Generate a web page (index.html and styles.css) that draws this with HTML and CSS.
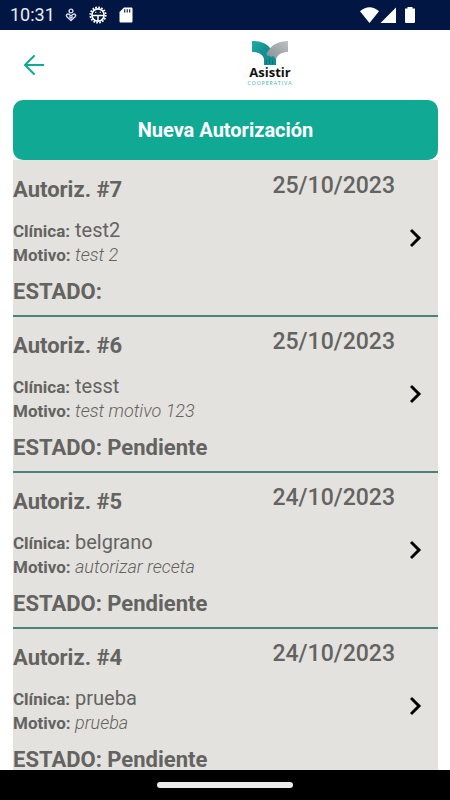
FILE: index.html
```html
<!DOCTYPE html>
<html lang="es">
<head>
<meta charset="utf-8">
<meta name="viewport" content="width=device-width, initial-scale=1">
<title>Autorizaciones</title>
<link rel="stylesheet" href="styles.css">
</head>
<body>
<div class="status">
  <span class="clock">10:31</span>
  <svg class="i-heart" viewBox="0 0 12 14" fill="none" stroke="#d5dbe8" stroke-width="1.4"><circle cx="6" cy="3" r="1.9"/><path d="M6 12.6 1.9 8.7C.6 7.3 2.3 5.2 4 6.3L6 8l2-1.7c1.7-1.1 3.4 1 2.1 2.4z"/><path d="M4.3 8.6 6 10.3l1.700-1.700"/></svg>
  <svg class="i-gear" viewBox="0 0 18 18" fill="none" stroke="#fff"><circle cx="9" cy="9" r="7.700" stroke-width="1.800" stroke-dasharray="1.700 1.325"/><circle cx="9" cy="9" r="6.100" stroke-width="1.600"/><path d="M3 9.400h12M9 9.400V15" stroke-width="1.500"/><path d="M6.300 6.300h1M10.700 6.300h1" stroke-width="1.200"/></svg>
  <svg class="i-card" viewBox="0 0 14 16"><path fill="#fff" d="M5 .5h7.200c.8 0 1.300.5 1.300 1.300v12.400c0 .8-.5 1.300-1.300 1.300H1.800c-.8 0-1.300-.5-1.300-1.300V5z"/><path d="M5.700 2.200v3.300M8.200 2.200v3.300M10.700 2.200v3.300" stroke="#011642" stroke-width="1.100"/></svg>
  <span class="spacer"></span>
  <svg class="i-signal" viewBox="0 0 56 18" fill="#fff"><path d="M0 5.200Q9.500-2.800 19 5.200L9.500 17z"/><path d="M20.500 17 36 1.500V17z"/><path d="M45 2.500h2.500V1h5v1.500H55v13.300q0 1.200-1.200 1.200h-7.600Q45 17 45 15.800z"/></svg>
</div>
<header class="top">
  <button class="back" type="button" aria-label="Volver"><svg viewBox="0 0 20 20" fill="none" stroke="#0fa994" stroke-width="2" stroke-linecap="round" stroke-linejoin="round"><path d="M10 1 1 10l9 9M1.500 10H19.500"/></svg></button>
  <div class="logo">
    <svg class="mark" viewBox="0 0 38 24">
      <defs>
        <linearGradient id="teal" x1="0" y1="0" x2="1" y2="1"><stop offset="0" stop-color="#22aaa6"/><stop offset=".5" stop-color="#128f92"/><stop offset="1" stop-color="#0d8f93"/></linearGradient>
        <linearGradient id="gray" x1="0" y1="1" x2="1" y2="0"><stop offset="0" stop-color="#888f92"/><stop offset="1" stop-color="#bec1c3"/></linearGradient>
      </defs>
      <path fill="url(#teal)" d="M1 0C9 0 15 2 19 7l6 8v9H13v-6C12 13.500 7 11 1 11z"/>
      <path fill="url(#gray)" d="M37 0v11c-6 0-10 2-12 7l-3-3-2 1-1.500-1.500-2 .5-1-2.500 2-3C20.500 4 28 0 37 0z"/>
      <path d="M15.500 23v-4M18.500 23v-5M21.500 23v-4" stroke="#086f78" stroke-width="1"/>
    </svg>
    <span class="brand">Asistir</span>
    <span class="coop">COOPERATIVA</span>
  </div>
</header>
<main class="content">
  <button class="new" type="button">Nueva Autorización</button>
  <ul class="list">
    <li class="item"><div class="info"><h2>Autoriz. #7</h2><p class="clinic"><b>Clínica:</b> test2</p><p class="reason"><b>Motivo:</b> <i>test 2</i></p><p class="state">ESTADO:</p></div><time class="date">25/10/2023</time><button class="go" type="button" aria-label="Ver autorización 7"><svg viewBox="0 0 14 20"><path d="m2 3 7 7-7 7"/></svg></button></li>
    <li class="item"><div class="info"><h2>Autoriz. #6</h2><p class="clinic"><b>Clínica:</b> tesst</p><p class="reason"><b>Motivo:</b> <i>test motivo 123</i></p><p class="state">ESTADO: Pendiente</p></div><time class="date">25/10/2023</time><button class="go" type="button" aria-label="Ver autorización 6"><svg viewBox="0 0 14 20"><path d="m2 3 7 7-7 7"/></svg></button></li>
    <li class="item"><div class="info"><h2>Autoriz. #5</h2><p class="clinic"><b>Clínica:</b> belgrano</p><p class="reason"><b>Motivo:</b> <i>autorizar receta</i></p><p class="state">ESTADO: Pendiente</p></div><time class="date">24/10/2023</time><button class="go" type="button" aria-label="Ver autorización 5"><svg viewBox="0 0 14 20"><path d="m2 3 7 7-7 7"/></svg></button></li>
    <li class="item"><div class="info"><h2>Autoriz. #4</h2><p class="clinic"><b>Clínica:</b> prueba</p><p class="reason"><b>Motivo:</b> <i>prueba</i></p><p class="state">ESTADO: Pendiente</p></div><time class="date">24/10/2023</time><button class="go" type="button" aria-label="Ver autorización 4"><svg viewBox="0 0 14 20"><path d="m2 3 7 7-7 7"/></svg></button></li>
  </ul>
</main>
<div class="nav"><span class="pill"></span></div>
</body>
</html>
```
FILE: styles.css
```css
* { box-sizing: border-box; }
body {
  margin: 0;
  height: 100vh;
  display: flex;
  flex-direction: column;
  background: #fff;
  color: #636361;
  font-family: Roboto, "Liberation Sans", sans-serif;
}
h2, p, ul { margin: 0; padding: 0; }
button { border: 0; padding: 0; background: none; font-family: inherit; }
svg { display: block; }

.status {
  flex: none;
  display: flex;
  align-items: center;
  height: 30px;
  padding: 0 34px 0 10px;
  background: #011642;
}
.clock { width: 55px; color: #e8ebf2; font-size: 18px; line-height: 32px; }
.i-heart { width: 12px; height: 14px; margin-right: 12px; }
.i-gear { width: 18px; height: 18px; margin-right: 12px; }
.i-card { width: 14px; height: 16px; }
.spacer { flex: 1; }
.i-signal { width: 56px; height: 18px; }

.top {
  flex: none;
  display: grid;
  grid-template-columns: 90px 1fr;
  align-items: center;
  height: 70px;
}
.back { width: 44px; height: 44px; margin-left: 12px; display: grid; place-items: center; }
.back svg { width: 20px; height: 20px; }
.logo { display: flex; flex-direction: column; align-items: center; padding-bottom: 2px; }
.mark { width: 38px; height: 24px; }
.brand { color: #111; font: 700 13px/14px "Open Sans", sans-serif; }
.coop { color: #3fb3ab; font: 5px/8px Lato, sans-serif; letter-spacing: 1px; }

.content {
  flex: 1;
  min-height: 0;
  overflow: hidden;
  padding: 0 12px 0 13px;
}
.new {
  display: block;
  width: 100%;
  height: 60px;
  border-radius: 10px;
  background: #0fa994;
  color: #fff;
  font-size: 20px;
  font-weight: 700;
}
.list { list-style: none; padding-top: 1px; background: #e3e2de; }
.item {
  display: grid;
  grid-template-columns: 1fr auto 43px;
  height: 156px;
  border-bottom: 2px solid #4c8377;
}
.info { padding-top: 15px; }
h2, .state { font-size: 22px; line-height: 28px; font-weight: 700; }
.clinic, .reason { line-height: 24px; }
.clinic { margin-top: 14px; font-size: 20px; }
.reason { font-size: 18px; font-weight: 300; }
b { font-size: 17px; font-weight: 700; }
.state { margin-top: 11px; }
.date { padding-top: 11px; font-size: 23px; line-height: 28px; font-weight: 500; }
.go { display: grid; place-items: center; }
.go svg { width: 14px; height: 20px; }
.go path { fill: none; stroke: #000; stroke-width: 3; stroke-linecap: square; }

.nav { flex: none; display: grid; place-items: center; height: 30px; background: #000; }
.pill { width: 136px; height: 6px; border-radius: 3px; background: #ececec; }
```
